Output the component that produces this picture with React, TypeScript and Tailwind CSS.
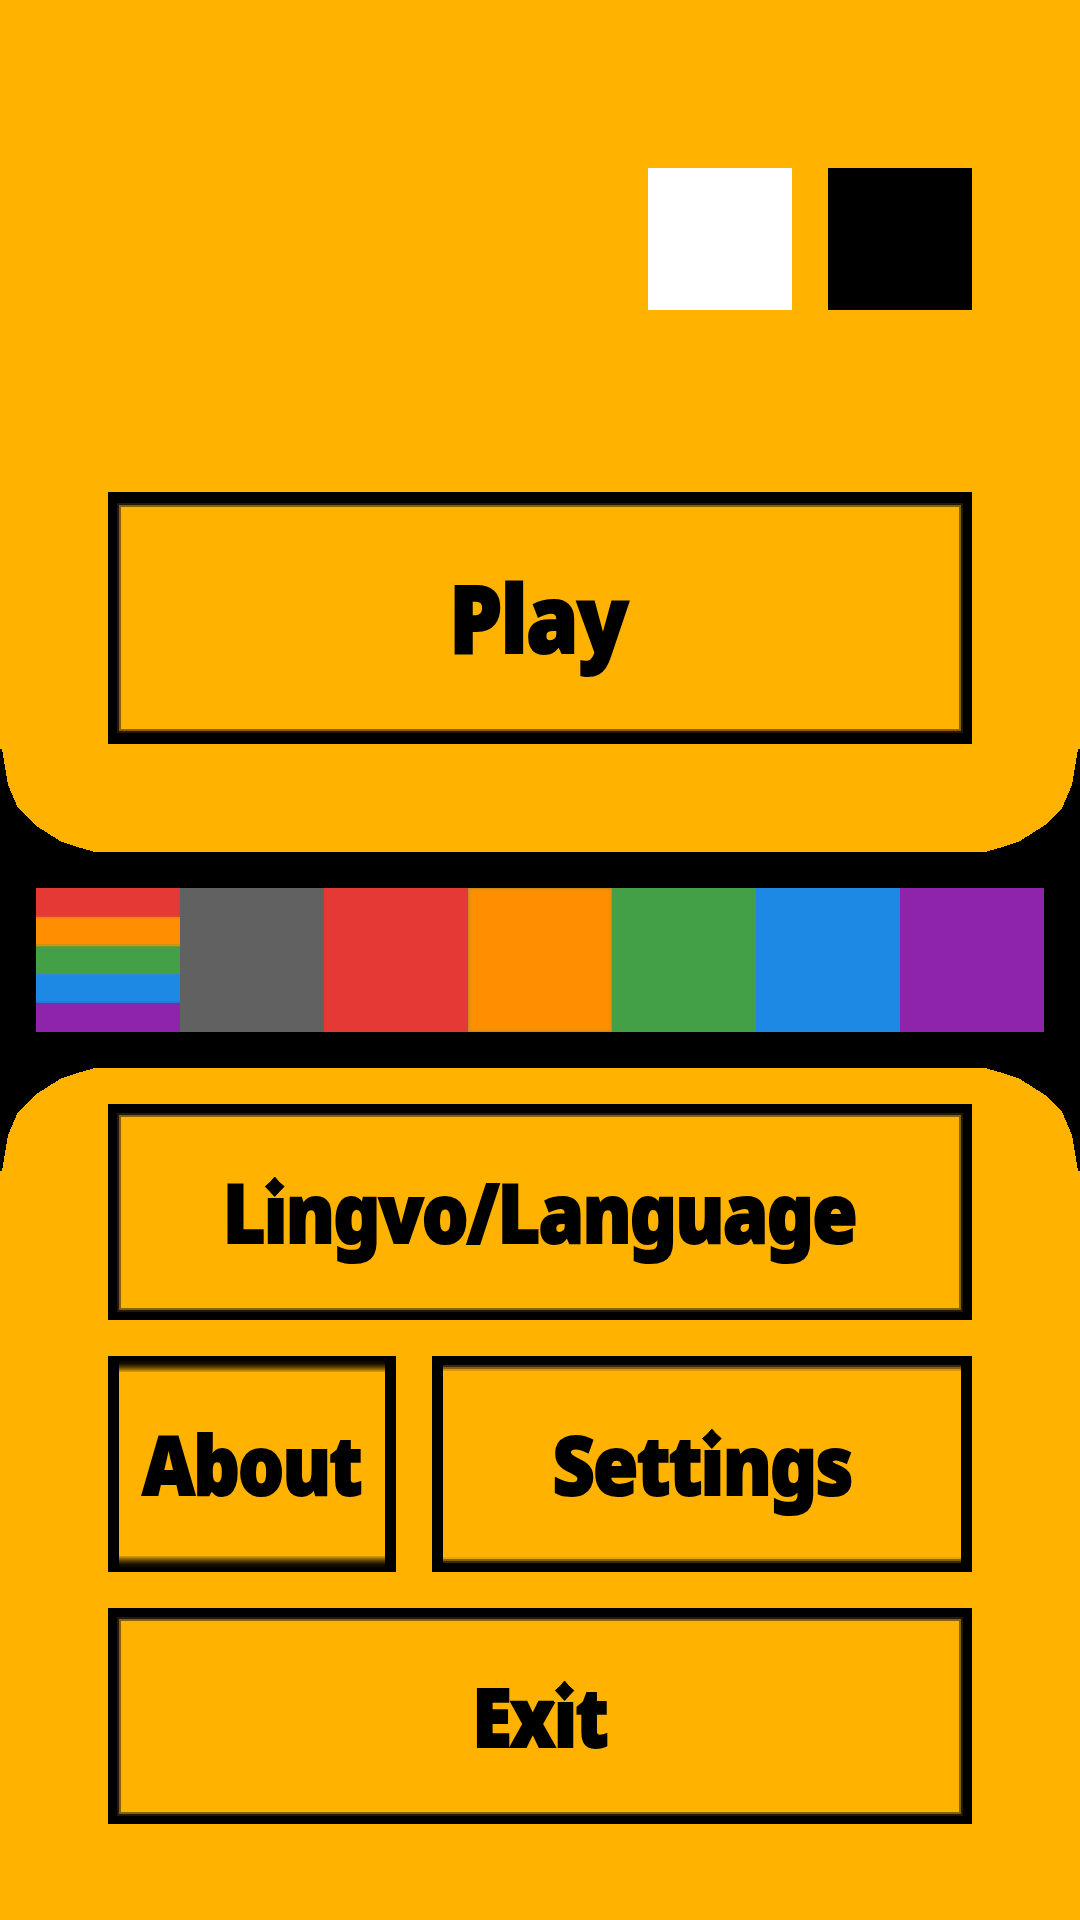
import type { ReactNode } from 'react';

/** Letter "i" whose dot is a diamond. */
function DiamondI() {
  return (
    <span className="relative">
      i
      <svg className="absolute left-1/2 top-[19px] ml-[-12px] h-[24px] w-[24px]" viewBox="0 0 24 24">
        <rect width="24" height="24" fill="#ffb300" />
        <path d="M12 3 Q16 8 22.5 12.5 Q17.5 17 12 22.5 Q6.5 17 1.5 12.5 Q8 8 12 3Z" fill="#000" stroke="#000" strokeWidth="1" />
      </svg>
    </span>
  );
}

const labelStyle =
  'block whitespace-nowrap text-center font-["Noto_Sans",sans-serif] font-black tracking-[-2px] text-black [-webkit-text-stroke:2px_#000]';

/** Full-width button with an evenly softened inner edge. */
function WideButton({ className, children }: { className: string; children: ReactNode }) {
  return (
    <button className={`block border-x-[9px] border-black ${className}`}>
      <span className="block size-full border-2 border-[#241900]">
        <span className="flex size-full items-center justify-center border-2 border-[#8a6100]">{children}</span>
      </span>
    </button>
  );
}

function Corner({ className }: { className: string }) {
  return (
    <svg className={`absolute h-[110px] w-[108px] ${className}`} viewBox="0 0 108 110" shapeRendering="crispEdges">
      <path d="M0 7 L2 7 L8 43 L18 66 L35 83 L60 99 L74 104 L95 110 L0 110Z" fill="#000" />
    </svg>
  );
}

const swatches = ['bg-[#616161]', 'bg-[#e53935]', 'bg-[#ff8f00] shadow-[inset_0_0_0_1px_#c98a18,inset_0_0_4px_1px_#d98c10]', 'bg-[#43a047]', 'bg-[#1e88e5]', 'bg-[#8e24aa]'];

export default function App() {
  return (
    <main className="flex h-[1920px] w-[1080px] flex-col overflow-hidden bg-black">
      <section className="relative h-[852px] bg-[#ffb300] px-[108px] pt-[168px]">
        <div className="flex justify-end gap-9">
          <button aria-label="White" className="h-[142px] w-36 bg-white" />
          <button aria-label="Black" className="h-[142px] w-36 bg-black" />
        </div>
        <WideButton className="mt-[182px] h-[252px] w-full border-y-[11px]">
          <span className={`${labelStyle} ml-[-4px] mt-[-2px] scale-x-[0.9] text-[94px] leading-[128px]`}>Play</span>
        </WideButton>
        <Corner className="bottom-0 left-0" />
        <Corner className="bottom-0 right-0 -scale-x-100" />
      </section>

      <div className="mx-9 my-9 flex h-36 shrink-0">
        <button aria-label="Rainbow" className="flex w-36 flex-col">
          <span className="block h-[29px] w-full border-b-2 border-[#e0442d] bg-[#e53935]" />
          <span className="block h-[29px] w-full border-y-2 border-b-[#cf9212] border-t-[#ff800c] bg-[#ff8f00]" />
          <span className="block h-[28px] w-full border-t border-[#6b9e38] bg-[#43a047]" />
          <span className="block h-[29px] w-full border-y-2 border-b-[#3072dc] border-t-[#2889d0] bg-[#1e88e5]" />
          <span className="block h-[29px] w-full border-t-2 border-[#8529ae] bg-[#8e24aa]" />
        </button>
        {swatches.map((color) => (
          <button key={color} aria-label="Color" className={`w-36 ${color}`} />
        ))}
      </div>

      <section className="relative flex h-[852px] flex-col gap-9 bg-[#ffb300] px-[108px] pt-9">
        <Corner className="left-0 top-0 -scale-y-100" />
        <Corner className="right-0 top-0 -scale-100" />
        <WideButton className="h-[216px] w-full border-b-[8px] border-t-[9px]">
          <span className={`${labelStyle} ml-[-1px] mt-[-3px] scale-x-[0.896] text-[82px] leading-[112px]`}>
            L<DiamondI />ngvo/Language
          </span>
        </WideButton>
        <div className="flex gap-9">
          <button className="relative flex h-[216px] w-72 items-center justify-center border-x-[11px] border-black">
            <span className="absolute inset-x-0 top-0 h-4 bg-[linear-gradient(#000_4px,#1c1300_8px,#553c00_11px,#a87600_14px,#e09d00_16px)]" />
            <span className="absolute inset-x-0 bottom-0 h-4 bg-[linear-gradient(0deg,#000_4px,#1c1300_8px,#553c00_11px,#a87600_14px,#e09d00_16px)]" />
            <span className={`${labelStyle} mt-[-2px] scale-x-[0.885] text-[82px] leading-[112px]`}>About</span>
          </button>
          <button className="block h-[216px] w-[540px] border-x-[11px] border-y-[9px] border-black">
            <span className="block size-full border-y-2 border-[#3a2900]">
              <span className="block size-full border-y-2 border-[#8a6100]">
                <span className="flex size-full items-center justify-center border-y-2 border-t-[#d69600] border-b-[#e8a300]">
                  <span className={`${labelStyle} mt-[-2px] scale-x-[0.895] text-[82px] leading-[112px]`}>
                    Sett<DiamondI />ngs
                  </span>
                </span>
              </span>
            </span>
          </button>
        </div>
        <WideButton className="h-[216px] w-full border-b-[8px] border-t-[9px]">
          <span className={`${labelStyle} mt-[-3px] scale-x-[0.88] text-[82px] leading-[112px]`}>
            Ex<DiamondI />t
          </span>
        </WideButton>
      </section>
    </main>
  );
}
